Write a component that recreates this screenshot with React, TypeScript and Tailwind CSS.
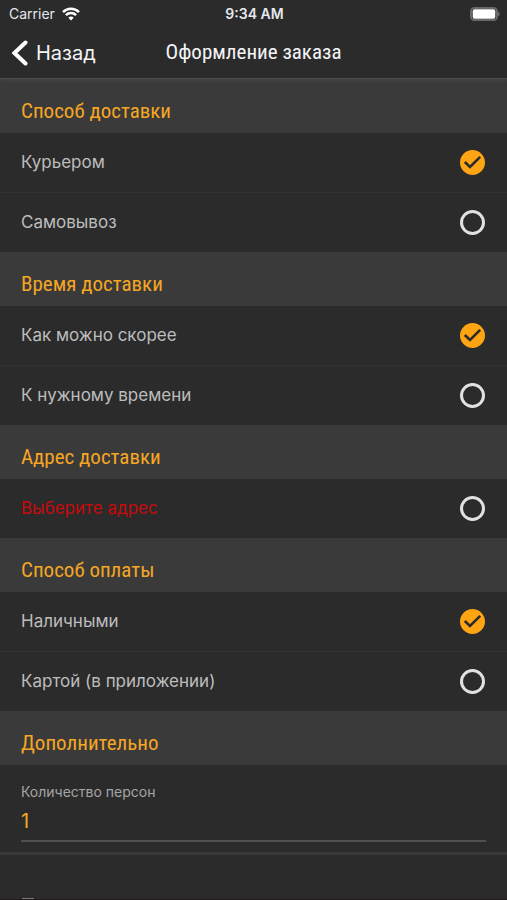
import React, { useState } from 'react';

interface OptionGroup {
  name: string;
  title: string;
  options: { label: string; error?: boolean }[];
  initial: number | null;
}

const groups: OptionGroup[] = [
  {
    name: 'delivery',
    title: 'Способ доставки',
    options: [{ label: 'Курьером' }, { label: 'Самовывоз' }],
    initial: 0,
  },
  {
    name: 'time',
    title: 'Время доставки',
    options: [{ label: 'Как можно скорее' }, { label: 'К нужному времени' }],
    initial: 0,
  },
  {
    name: 'address',
    title: 'Адрес доставки',
    options: [{ label: 'Выберите адрес', error: true }],
    initial: null,
  },
  {
    name: 'payment',
    title: 'Способ оплаты',
    options: [{ label: 'Наличными' }, { label: 'Картой (в приложении)' }],
    initial: 0,
  },
];

const StatusBar: React.FC = () => (
  <div className="grid h-7 grid-cols-3 items-center pr-[7px] pl-[9px] text-sm text-gray-200">
    <div className="flex items-center gap-[7px]">
      <span>Carrier</span>
      <svg className="h-3.5 w-[18px]" viewBox="0 0 18 14" fill="none" stroke="#ffffff" strokeWidth="2.5">
        <path d="M1 5.1C5.5.7 12.5.7 17 5.1" />
        <path d="M3.9 8.2C6.8 5.4 11.2 5.4 14.1 8.2" />
        <path d="M9 13.5L6.3 10.7C7.8 9.2 10.2 9.2 11.7 10.7Z" fill="#ffffff" stroke="none" />
      </svg>
    </div>
    <span className="text-center font-semibold">9:34 AM</span>
    <svg className="h-3.5 w-[30px] justify-self-end" viewBox="0 0 30 14">
      <rect x="1" y="1" width="26" height="12" rx="3.5" fill="#2b2b2b" stroke="#68686b" strokeWidth="2" />
      <rect x="2.7" y="2.3" width="22.6" height="9.4" rx="2" fill="#ffffff" />
      <path d="M28 4.8C30.3 5.5 30.3 8.5 28 9.2Z" fill="#68686b" />
    </svg>
  </div>
);

const SectionTitle: React.FC<{ children: React.ReactNode }> = ({ children }) => (
  <h2 className="flex h-[54px] items-center bg-[#3a3a3a] px-[21px] pt-3 font-['Roboto_Condensed',Roboto,sans-serif] text-[21px] text-[#f5a623]">
    {children}
  </h2>
);

const OptionList: React.FC<{ group: OptionGroup }> = ({ group }) => {
  const [selected, setSelected] = useState(group.initial);

  return (
    <section>
      <SectionTitle>{group.title}</SectionTitle>
      <div className="grid gap-px bg-[#323232]">
        {group.options.map((option, index) => (
          <label
            key={option.label}
            className="flex h-[59px] cursor-pointer items-center justify-between bg-[#2b2b2b] pr-[22px] pl-[21px]"
          >
            <span className={option.error ? 'text-[#c80a0c]' : 'text-[#bdbdbd]'}>{option.label}</span>
            <span className="grid size-[25px]">
              <input
                type="radio"
                name={group.name}
                checked={selected === index}
                onChange={() => setSelected(index)}
                className="col-start-1 row-start-1 size-[25px] appearance-none rounded-full border-[3px] border-[#e2e2e2] checked:border-[#ffa514] checked:bg-[#ffa514]"
              />
              {selected === index && (
                <svg
                  className="pointer-events-none z-10 col-start-1 row-start-1 size-[25px]"
                  viewBox="0 0 25 25"
                  fill="none"
                  stroke="#2b2b2b"
                  strokeWidth="2.6"
                >
                  <path d="M4.8 12L10 17L20.2 6.8" />
                </svg>
              )}
            </span>
          </label>
        ))}
      </div>
    </section>
  );
};

export default function App() {
  const [persons, setPersons] = useState('1');

  return (
    <div className="flex h-screen flex-col overflow-hidden bg-[#2b2b2b] font-[Inter,sans-serif] text-[17px]">
      <header className="z-10 shrink-0 border-b border-[#4a4a4a] bg-[#2b2b2b] shadow-[0_1px_4px_#4a4a4a]">
        <StatusBar />
        <div className="grid h-[50px] grid-cols-[1fr_auto_1fr] items-center px-3 text-gray-100">
          <button type="button" className="flex items-center gap-2 text-xl">
            <svg className="h-[26px] w-4" viewBox="0 0 16 26" fill="none" stroke="#ffffff" strokeWidth="4" strokeLinecap="round">
              <path d="M13.5 2.5L2.5 13L13.5 23.5" />
            </svg>
            Назад
          </button>
          <h1 className="font-['Roboto_Condensed',Roboto,sans-serif] text-[21px]">Оформление заказа</h1>
        </div>
      </header>

      <main className="min-h-0 flex-1 overflow-hidden">
        {groups.map((group) => (
          <OptionList key={group.name} group={group} />
        ))}
        <section>
          <SectionTitle>Дополнительно</SectionTitle>
          <div className="px-[21px] pt-[17px]">
            <label htmlFor="persons" className="block text-sm text-[#a5a5a5]">
              Количество персон
            </label>
            <input
              id="persons"
              inputMode="numeric"
              value={persons}
              onChange={(e) => setPersons(e.target.value)}
              className="block h-10 w-full border-b-2 border-[#505050] bg-transparent text-xl text-[#f5a623] outline-none"
            />
          </div>
        </section>
      </main>

      <footer className="flex h-12 shrink-0 items-end border-t-[3px] border-b border-t-[#383838] border-b-[#21191d] px-[22px]">
        <div className="h-px w-3 bg-[#777777]" />
      </footer>
    </div>
  );
}
